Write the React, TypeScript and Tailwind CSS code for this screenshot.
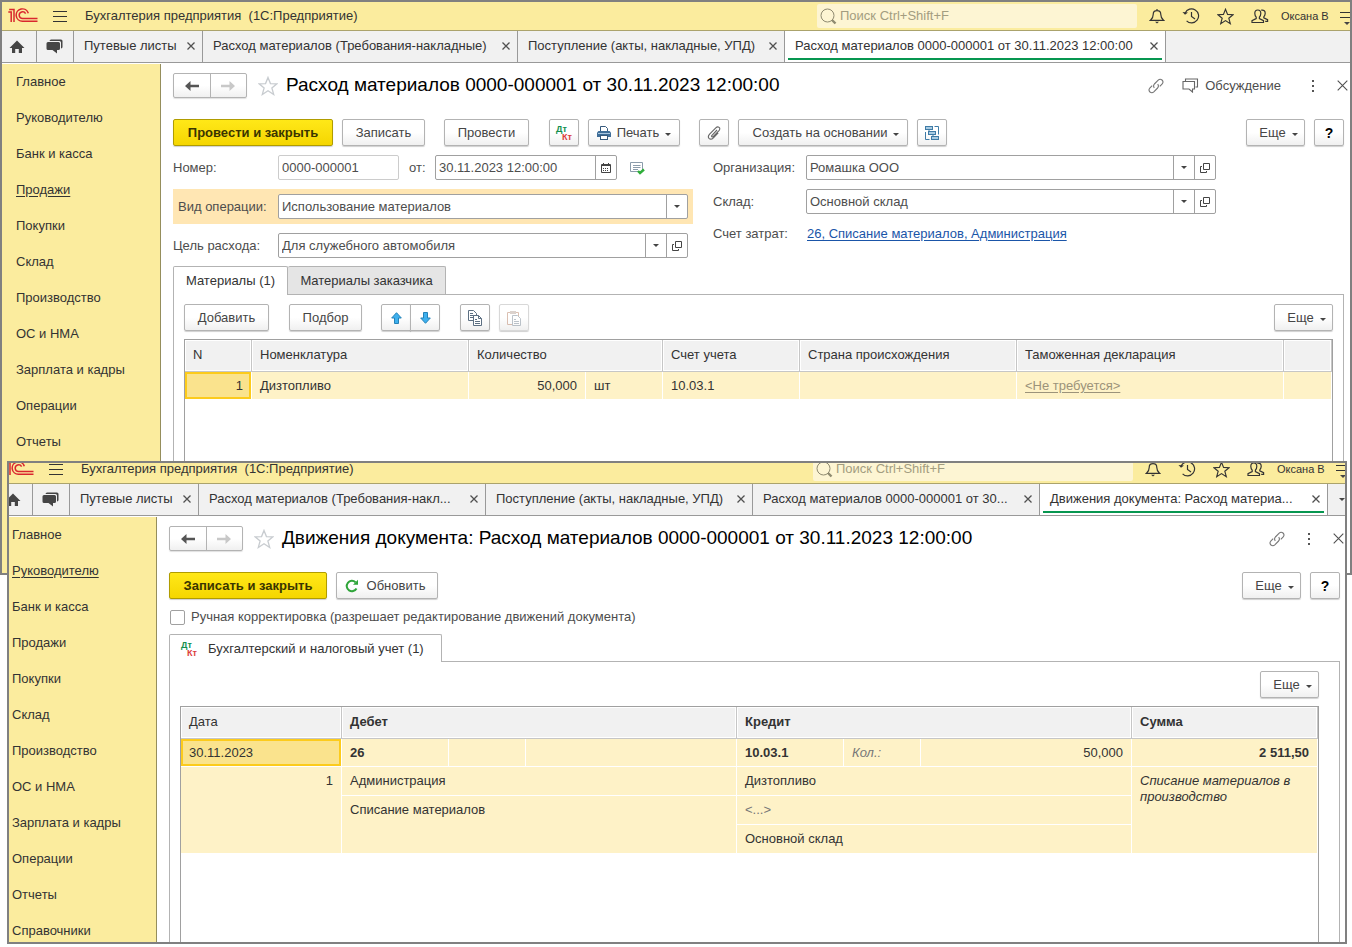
import React from "react";
import clsx from "clsx";

type Tab = { title: string; width: string; active?: boolean };

const SECTIONS = [
  "Главное",
  "Руководителю",
  "Банк и касса",
  "Продажи",
  "Покупки",
  "Склад",
  "Производство",
  "ОС и НМА",
  "Зарплата и кадры",
  "Операции",
  "Отчеты",
  "Справочники",
];

/* ICONS */
const Logo = () => (
  <svg width="30" height="16" viewBox="0 0 30 16" fill="none" stroke="#d9272e" strokeWidth="1.5">
    <path d="M0.3 4 H3.2 V14 M1.2 1.4 H6 V14" />
    <path d="M20.3 5.2 A6.2 6.2 0 1 0 14.5 13.3 H29.5" />
    <path d="M17.6 5.6 A3.4 3.4 0 1 0 14.5 10.6 H29.5" />
  </svg>
);

const Home = () => (
  <svg width="16" height="14" viewBox="0 0 16 14" fill="#454545">
    <path d="M8 0.5 L15.5 8 H13 V13 H9.8 V9 H6.2 V13 H3 V8 H0.5 Z" />
  </svg>
);

const Chats = () => (
  <svg width="18" height="15" viewBox="0 0 18 15" fill="#454545">
    <path d="M5 0.5 H15 Q16.5 0.5 16.5 2 V8 Q16.5 9.3 15 9.5 V3.5 Q15 2 13.5 2 H3.5 Q3.8 0.5 5 0.5 Z" />
    <path d="M2 3 H12.5 Q14 3 14 4.5 V9.5 Q14 11 12.5 11 H11 V14.5 L6.5 11 H2 Q0.5 11 0.5 9.5 V4.5 Q0.5 3 2 3 Z" />
  </svg>
);

const Cross = ({ size = 8 }: { size?: number }) => (
  <svg width={size} height={size} viewBox="0 0 8 8" stroke="#505050" strokeWidth={size > 8 ? 0.8 : 1.3}>
    <path d="M0.5 0.5 L7.5 7.5 M7.5 0.5 L0.5 7.5" />
  </svg>
);

const Search = () => (
  <svg width="17" height="17" viewBox="0 0 17 17" fill="none" stroke="#8f8a70" className="shrink-0">
    <circle cx="7.5" cy="7.5" r="6.5" />
    <path d="M12 12 L15.5 15.5" strokeWidth="2.4" />
  </svg>
);

const Bell = () => (
  <svg width="16" height="16" viewBox="0 0 16 16" fill="none" stroke="#333" strokeWidth="1.2">
    <path d="M8 1 V2.5 M1.5 12.3 H14.5 Q11.8 10 11.8 6.5 Q11.8 2.7 8 2.7 Q4.2 2.7 4.2 6.5 Q4.2 10 1.5 12.3 Z" />
    <path d="M6 13.8 H10 L8 15.5 Z" fill="#333" stroke="none" />
  </svg>
);

const History = () => (
  <svg width="18" height="16" viewBox="0 0 18 16" fill="none" stroke="#333" strokeWidth="1.2">
    <path d="M3.2 5 A7 7 0 1 1 4.6 12.8" />
    <path d="M9.5 4 V8.5 L13 11" />
    <path d="M0.5 4 L3 6.8 L6 4.5 Z" fill="#333" stroke="none" />
  </svg>
);

const Star = ({ size, color }: { size: number; color: string }) => (
  <svg width={size} height={size} viewBox="0 0 18 18" fill="none" stroke={color} strokeWidth="1.2">
    <path d="M9 1.3 L11.2 6.8 L17 7.1 L12.5 10.8 L14.1 16.6 L9 13.3 L3.9 16.6 L5.5 10.8 L1 7.1 L6.8 6.8 Z" />
  </svg>
);

const Users = () => (
  <svg width="18" height="15" viewBox="0 0 18 15" fill="none" stroke="#333" strokeWidth="1.2">
    <path d="M6.8 1 Q9.8 1 9.8 4.3 Q9.8 6.6 8.4 8.2 V9.6 L12.5 11.6 V13.5 H1 V11.6 L5.2 9.6 V8.2 Q3.8 6.6 3.8 4.3 Q3.8 1 6.8 1 Z" />
    <path d="M10.2 1.2 Q14.4 0.6 14.2 4.5 Q14.1 6.3 12.8 7.8 V8.8 L16.6 10.6 V12.3 H14.2" />
  </svg>
);

const Link = () => (
  <svg width="16" height="16" viewBox="0 0 16 16" fill="none" stroke="#757575" strokeWidth="1.1">
    <path d="M6.3 9.8 Q4.8 7.8 6.4 6 L10.2 2.2 Q12 0.5 14 2 Q15.9 4 14.2 6 L11.8 8.4" />
    <path d="M9.7 6.2 Q11.2 8.2 9.6 10 L5.8 13.8 Q4 15.5 2 14 Q0.1 12 1.8 10 L4.2 7.6" />
  </svg>
);

const Discuss = () => (
  <svg width="17" height="15" viewBox="0 0 17 15" fill="none" stroke="#666" strokeWidth="1.1">
    <path d="M3.5 3 V1 H15.5 V9 H13.5" />
    <path d="M1 3.5 H12.5 V11 H10.5 V14 L7 11 H1 Z" />
  </svg>
);

const DtKt = () => (
  <svg width="18" height="18" viewBox="0 0 18 18" fontFamily="Liberation Sans, Arial, sans-serif" fontWeight="bold" fontSize="9">
    <text x="1" y="8" fill="#13904f">Дт</text>
    <text x="7" y="16" fill="#dc3c3c">Кт</text>
  </svg>
);

const Printer = () => (
  <svg width="14" height="14" viewBox="0 0 14 14">
    <path d="M3.5 6 V0.5 H8.5 L10.5 2.5 V6" fill="#fff" stroke="#35597c" />
    <path d="M1.5 5 H12.5 L14 6.5 V11 H0 V6.5 Z" fill="#3f6e99" />
    <path d="M1 7.5 H13" stroke="#a9c6df" />
    <rect x="3.5" y="9.5" width="7" height="4" fill="#fff" stroke="#35597c" />
  </svg>
);

const Clip = () => (
  <svg width="14" height="14" viewBox="0 0 14 14" fill="none" stroke="#666" strokeWidth="1.1">
    <path d="M10 4 L5 9.3 Q4.2 10.2 4.9 10.7 Q5.6 11.2 6.4 10.4 L12 4.6 Q13.6 2.6 12.1 1.4 Q10.5 0.2 8.8 1.9 L2.6 8.2 Q0.4 10.6 2 12.4 Q4 14.2 6.4 11.8 L11.2 6.8" />
  </svg>
);

const Structure = () => (
  <svg width="16" height="16" viewBox="0 0 16 16" fill="#a9cbe2" stroke="#3f7ba6">
    <rect x="1.5" y="1.5" width="7" height="3" />
    <rect x="4.5" y="6.5" width="7" height="3" />
    <rect x="7.5" y="11.5" width="7" height="3" />
    <path d="M10.5 1.5 H14.5 V9.5 M1.5 7 V14.5 H5.5 M5 4.5 V6.5 M9 9.5 V11.5" fill="none" />
  </svg>
);

const Posted = () => (
  <svg width="16" height="14" viewBox="0 0 16 14" fill="none">
    <path d="M1.5 1.5 H13.5 V10.5 H1.5 Z M4 4.5 H11.5 M4 6.5 H11.5 M4 8.5 H9" stroke="#8b9cab" />
    <path d="M9 10 L11 12 L15 8.5" stroke="#2fae3a" strokeWidth="2.4" />
  </svg>
);

const Calendar = () => (
  <svg width="10" height="10" viewBox="0 0 10 10" fill="none" stroke="#444">
    <path d="M0.5 1.5 H9.5 V9.5 H0.5 Z M0.5 2.5 H9.5 M2.5 0 V2 M7.5 0 V2" />
    <path d="M2 5.5 H8 M2 7.5 H8" strokeDasharray="1 1" />
  </svg>
);

const Open = () => (
  <svg width="10" height="10" viewBox="0 0 10 10" fill="none" stroke="#444">
    <path d="M3.5 0.5 H9.5 V6.5 H3.5 Z M2 3.5 H0.5 V9.5 H6.5 V8" />
  </svg>
);

const Caret = () => (
  <svg width="6" height="3" viewBox="0 0 6 3" fill="#444">
    <path d="M0 0 H6 L3 3 Z" />
  </svg>
);

const Arrow = ({ flip, color }: { flip?: boolean; color: string }) => (
  <svg width="14" height="10" viewBox="0 0 14 10" fill={color} className={clsx(flip && "rotate-180")}>
    <path d="M0 5 L5.5 0 V3.7 H14 V6.3 H5.5 V10 Z" />
  </svg>
);

const Move = ({ down }: { down?: boolean }) => (
  <svg width="11" height="12" viewBox="0 0 11 12" fill="#3eb0ee" stroke="#2482b8" className={clsx(down && "rotate-180")}>
    <path d="M5.5 0.7 L10.3 6 H7.5 V11.5 H3.5 V6 H0.7 Z" />
  </svg>
);

const Copy = () => (
  <svg width="16" height="16" viewBox="0 0 16 16" fill="#fff" stroke="#5c6f82">
    <path d="M1.5 0.5 H6.5 L9.5 3.5 V10.5 H1.5 Z M3 3.5 H6 M3 5.5 H8 M3 7.5 H8" />
    <path d="M6.5 5.5 H11.5 L14.5 8.5 V15.5 H6.5 Z M11.5 5.5 V8.5 H14.5 M8 9.5 H10 M8 11.5 H13 M8 13.5 H13" />
  </svg>
);

const Paste = () => (
  <svg width="16" height="16" viewBox="0 0 16 16" fill="#fff" className="opacity-50">
    <path d="M1.5 2.5 H12.5 V14.5 H1.5 Z" stroke="#b98268" />
    <path d="M4 1 H10 V4 H4 Z" fill="#b9a79d" />
    <path d="M6.5 5.5 H11.5 L14.5 8.5 V15.5 H6.5 Z M8 9.5 H10 M8 11.5 H13 M8 13.5 H13" stroke="#7d8b99" />
  </svg>
);

const Refresh = () => (
  <svg width="14" height="14" viewBox="0 0 14 14" fill="none" stroke="#2fa53a" strokeWidth="2">
    <path d="M11.5 9.5 A5.2 5.2 0 1 1 10.5 3.2" />
    <path d="M8 5.8 H13 V0.8 Z" fill="#2fa53a" stroke="none" />
  </svg>
);

/* CONTROLS */
type ButtonProps = React.ButtonHTMLAttributes<HTMLButtonElement> & { primary?: boolean };

const Button = ({ primary, className, ...rest }: ButtonProps) => (
  <button
    type="button"
    className={clsx(
      "flex h-[27px] shrink-0 items-center justify-center rounded-xs border shadow-[0_1px_1px_#00000030]",
      primary
        ? "border-[#b09c00] bg-linear-to-b from-[#ffe817] to-[#f5d600] font-bold text-[#3a3500]"
        : "border-[#b3b3b3] bg-linear-to-b from-white from-50% to-[#f0f0f0] text-[#454545]",
      className
    )}
    {...rest}
  />
);

const More = () => (
  <Button className="w-[59px] gap-1.5 pl-1.5">
    Еще
    <span className="pt-1">
      <Caret />
    </span>
  </Button>
);

const Field = ({ id, value, open }: { id: string; value: string; open?: boolean }) => (
  <div className="flex h-[25px] w-[410px] rounded-xs border border-[#a0a0a0] bg-white">
    <div className="relative flex flex-1">
      <select id={id} className="w-full appearance-none pl-[3px] outline-none">
        <option>{value}</option>
      </select>
      <span className="pointer-events-none absolute inset-y-0 right-0 flex w-[21px] items-center justify-center border-l border-[#a0a0a0]">
        <Caret />
      </span>
    </div>
    {open && (
      <button type="button" aria-label="Открыть" className="flex w-[21px] items-center justify-center border-l border-[#a0a0a0]">
        <Open />
      </button>
    )}
  </div>
);

/* WINDOW */
type WindowProps = {
  tabs: Tab[];
  section: string;
  overflow?: boolean;
  children: React.ReactNode;
};

const AppWindow = ({ tabs, section, overflow, children }: WindowProps) => (
  <div className="flex min-h-0 flex-1 flex-col">
    {/* TOP */}
    <header className="flex h-[29px] shrink-0 items-center border-b border-[#aba36c] bg-[#fbec9e] pl-1.5">
      <Logo />
      <button type="button" aria-label="Меню" className="ml-[15px] flex w-[14px] flex-col gap-1">
        <span className="h-px bg-[#333]" />
        <span className="h-px bg-[#333]" />
        <span className="h-px bg-[#333]" />
      </button>
      <span className="ml-[18px] whitespace-pre">Бухгалтерия предприятия  (1С:Предприятие)</span>
      <label className="ml-auto flex h-6 w-80 items-center gap-[3px] rounded-xs bg-[#fdf5d3] pl-[3px]">
        <Search />
        <input
          type="search"
          aria-label="Поиск"
          placeholder="Поиск Ctrl+Shift+F"
          className="w-full outline-none placeholder:text-[#a39d80]"
        />
      </label>
      <div className="flex items-center gap-[17px] pl-3">
        <button type="button" aria-label="Уведомления"><Bell /></button>
        <button type="button" aria-label="История"><History /></button>
        <button type="button" aria-label="Избранное"><Star size={17} color="#333" /></button>
        <button type="button" aria-label="Пользователи"><Users /></button>
      </div>
      <span className="ml-3 w-[47px] text-[11px] whitespace-nowrap">Оксана В</span>
      <button type="button" aria-label="Настройки" className="ml-3 flex w-2.5 flex-col items-end gap-1 pt-1">
        <span className="h-px w-full bg-[#333]" />
        <span className="h-px w-full bg-[#333]" />
        <Caret />
      </button>
    </header>
    {/* TABS */}
    <nav className="flex h-8 shrink-0 border-b border-[#999] bg-[#f1f1f1]">
      <button type="button" aria-label="Начальная страница" className="flex w-[35px] shrink-0 items-center justify-center border-r border-[#999] pr-1">
        <Home />
      </button>
      <button type="button" aria-label="Обсуждения" className="flex w-[37px] shrink-0 items-center justify-center border-r border-[#999]">
        <Chats />
      </button>
      {tabs.map((tab) => (
        <div
          key={tab.title}
          className={clsx("flex shrink-0 border-r border-[#999] px-[3px] pb-0.5", tab.width, tab.active && "bg-white")}
        >
          <div
            className={clsx(
              "flex flex-1 items-center justify-between border-b-2 pt-0.5 pr-1 pl-[7px]",
              tab.active ? "border-[#079650]" : "border-transparent"
            )}
          >
            <button type="button" className="whitespace-nowrap">{tab.title}</button>
            <button type="button" aria-label="Закрыть"><Cross /></button>
          </div>
        </div>
      ))}
      {overflow && (
        <button type="button" aria-label="Другие вкладки" className="flex flex-1 items-center justify-end pr-px">
          <Caret />
        </button>
      )}
    </nav>
    <div className="flex min-h-0 flex-1 pt-px">
      {/* SECTIONS */}
      <aside className="w-[159px] shrink-0 overflow-hidden border-r border-[#958e5c] bg-[#fbec9e]">
        {SECTIONS.map((item) => (
          <a key={item} href="#" className={clsx("flex h-9 items-center pl-3.5", item === section && "underline underline-offset-2")}>
            {item}
          </a>
        ))}
      </aside>
      <main className="flex min-w-0 flex-1 flex-col pt-[9px] pr-1.5 pl-3">{children}</main>
    </div>
  </div>
);

const FormTitle = ({ title, discuss }: { title: string; discuss?: boolean }) => (
  <div className="flex h-[25px] shrink-0 items-center">
    <div className="flex h-[25px] w-[74px] rounded-xs border border-[#b3b3b3] bg-linear-to-b from-white from-50% to-[#f0f0f0] shadow-[0_1px_1px_#00000020]">
      <button type="button" aria-label="Назад" className="flex flex-1 items-center justify-center border-r border-[#b3b3b3]">
        <Arrow color="#555" />
      </button>
      <button type="button" aria-label="Вперед" disabled className="flex flex-1 items-center justify-center">
        <Arrow flip color="#c8c8c8" />
      </button>
    </div>
    <button type="button" aria-label="В избранное" className="ml-[11px]">
      <Star size={20} color="#c8ccd0" />
    </button>
    <h1 className="ml-2 pb-0.5 text-[19px] leading-6 whitespace-nowrap text-black">{title}</h1>
    <div className="-mr-1 ml-auto flex items-center gap-[18px]">
      <button type="button" aria-label="Ссылка"><Link /></button>
      {discuss && (
        <button type="button" className="flex items-center gap-1.5 pr-2 text-[#4d4d4d]">
          <Discuss />
          Обсуждение
        </button>
      )}
      <button type="button" aria-label="Дополнительно" className="flex w-3 flex-col items-center gap-[3px]">
        <span className="size-0.5 bg-[#555]" />
        <span className="size-0.5 bg-[#555]" />
        <span className="size-0.5 bg-[#555]" />
      </button>
      <button type="button" aria-label="Закрыть"><Cross size={11} /></button>
    </div>
  </div>
);

const Help = () => (
  <Button className="ml-[9px] w-[30px] text-sm font-bold text-black">?</Button>
);

const th = "border-r border-b border-[#c6c6c6] bg-[#f1f1f1] px-2 pb-0.5 text-left font-normal shadow-[inset_0_0_0_1px_#fff]";
const td = "border-r border-b border-white bg-[#fef2c7] px-2";
const selected = "border-r border-b border-white bg-[#fae38d] px-2 shadow-[inset_0_0_0_2px_#fccb1c]";

const MaterialsForm = () => (
  <>
    <FormTitle title="Расход материалов 0000-000001 от 30.11.2023 12:00:00" discuss />
    <div className="mt-[21px] flex">
      <Button primary className="w-40">Провести и закрыть</Button>
      <Button className="ml-[9px] w-[83px]">Записать</Button>
      <Button className="ml-[19px] w-[85px]">Провести</Button>
      <Button className="ml-5 w-[30px]" aria-label="Дт/Кт"><DtKt /></Button>
      <Button className="ml-[9px] w-[92px] gap-1.5">
        <Printer />
        Печать
        <span className="pt-1"><Caret /></span>
      </Button>
      <Button className="ml-[19px] w-[30px]" aria-label="Присоединенные файлы"><Clip /></Button>
      <Button className="ml-[9px] w-[170px] gap-1.5 pl-1.5">
        Создать на основании
        <span className="pt-1"><Caret /></span>
      </Button>
      <Button className="ml-[9px] w-[30px]" aria-label="Структура подчиненности"><Structure /></Button>
      <div className="ml-auto flex">
        <More />
        <Help />
      </div>
    </div>

    {/* FIELDS */}
    <div className="mt-[9px] flex text-[#4d4d4d]">
      <div className="w-[520px]">
        <div className="flex h-[25px] items-center">
          <label htmlFor="number" className="w-[105px]">Номер:</label>
          <input id="number" defaultValue="0000-000001" className="h-[25px] w-[121px] rounded-xs border border-[#ccc] pl-[3px]" />
          <label htmlFor="date" className="w-9 pl-2.5">от:</label>
          <div className="flex h-[25px] w-[182px] rounded-xs border border-[#a0a0a0]">
            <input id="date" defaultValue="30.11.2023 12:00:00" className="min-w-0 flex-1 pl-[3px]" />
            <button type="button" aria-label="Выбрать дату" className="flex w-[21px] items-center justify-center border-l border-[#a0a0a0]">
              <Calendar />
            </button>
          </div>
          <span className="ml-3"><Posted /></span>
        </div>
        <div className="mt-[9px] flex h-[35px] items-center bg-[#ffe6b3]">
          <label htmlFor="operation" className="w-[105px] pl-[5px]">Вид операции:</label>
          <Field id="operation" value="Использование материалов" />
        </div>
        <div className="mt-[9px] flex items-center">
          <label htmlFor="purpose" className="w-[105px]">Цель расхода:</label>
          <Field id="purpose" value="Для служебного автомобиля" open />
        </div>
      </div>
      <div className="ml-5 flex flex-col gap-[9px]">
        <div className="flex items-center">
          <label htmlFor="company" className="w-[93px]">Организация:</label>
          <Field id="company" value="Ромашка ООО" open />
        </div>
        <div className="flex items-center">
          <label htmlFor="store" className="w-[93px]">Склад:</label>
          <Field id="store" value="Основной склад" open />
        </div>
        <div className="flex h-[22px] items-center">
          <span className="w-[94px]">Счет затрат:</span>
          <a href="#" className="text-[#1a55a8] underline underline-offset-2">26, Списание материалов, Администрация</a>
        </div>
      </div>
    </div>

    {/* MATERIALS */}
    <div className="mt-2 flex h-7 shrink-0">
      <button type="button" className="z-10 -mb-px w-[115px] rounded-t-xs border border-b-0 border-[#b3b3b3] bg-white">
        Материалы (1)
      </button>
      <button type="button" className="w-[158px] rounded-t-xs border border-b-0 border-l-0 border-[#b3b3b3] bg-[#e5e5e5]">
        Материалы заказчика
      </button>
    </div>
    <div className="flex min-h-0 flex-1 flex-col border border-b-0 border-[#b3b3b3] px-2.5 pt-[9px]">
      <div className="flex">
        <Button className="w-[85px]">Добавить</Button>
        <Button className="ml-5 w-[73px]">Подбор</Button>
        <Button className="ml-[19px] w-[30px] rounded-r-none" aria-label="Вверх"><Move /></Button>
        <Button className="-ml-px w-[30px] rounded-l-none" aria-label="Вниз"><Move down /></Button>
        <Button className="ml-5 w-[30px]" aria-label="Копировать"><Copy /></Button>
        <Button className="ml-[9px] w-[30px] border-[#d8d8d8]" aria-label="Вставить" disabled><Paste /></Button>
        <div className="ml-auto"><More /></div>
      </div>
      <div className="mt-2 min-h-0 flex-1 border border-b-0 border-[#a0a0a0]">
        <table className="w-full table-fixed border-separate border-spacing-0">
          <colgroup>
            <col className="w-[67px]" />
            <col className="w-[217px]" />
            <col className="w-[117px]" />
            <col className="w-[77px]" />
            <col className="w-[137px]" />
            <col className="w-[217px]" />
            <col />
            <col className="w-12" />
          </colgroup>
          <thead>
            <tr className="h-8">
              <th className={th}>N</th>
              <th className={th}>Номенклатура</th>
              <th className={th} colSpan={2}>Количество</th>
              <th className={th}>Счет учета</th>
              <th className={th}>Страна происхождения</th>
              <th className={th}>Таможенная декларация</th>
              <th className={th} />
            </tr>
          </thead>
          <tbody>
            <tr className="h-7">
              <td className={clsx(selected, "text-right")}>1</td>
              <td className={td}>Дизтопливо</td>
              <td className={clsx(td, "text-right")}>50,000</td>
              <td className={td}>шт</td>
              <td className={td}>10.03.1</td>
              <td className={td} />
              <td className={td}>
                <a href="#" className="text-[#9c937a] underline underline-offset-2">&lt;Не требуется&gt;</a>
              </td>
              <td className={td} />
            </tr>
          </tbody>
        </table>
      </div>
    </div>
  </>
);

const PostingsForm = () => (
  <>
    <FormTitle title="Движения документа: Расход материалов 0000-000001 от 30.11.2023 12:00:00" />
    <div className="mt-[21px] flex">
      <Button primary className="w-[158px]">Записать и закрыть</Button>
      <Button className="ml-[9px] w-[102px] gap-2 pr-1">
        <Refresh />
        Обновить
      </Button>
      <div className="ml-auto flex">
        <More />
        <Help />
      </div>
    </div>
    <label className="mt-2 flex h-5 items-center gap-1.5 pl-px text-[#4d4d4d]">
      <input type="checkbox" className="size-[15px] appearance-none rounded-xs border border-[#a0a0a0] bg-white" />
      Ручная корректировка (разрешает редактирование движений документа)
    </label>
    <div className="mt-[7px] flex h-[27px] shrink-0">
      <button type="button" className="z-10 -mb-px flex w-[273px] items-center gap-2.5 rounded-t-xs border border-b-0 border-[#b3b3b3] bg-white pl-2.5">
        <DtKt />
        Бухгалтерский и налоговый учет (1)
      </button>
    </div>
    <div className="flex min-h-0 flex-1 flex-col border border-b-0 border-[#b3b3b3] px-2.5 pt-[9px]">
      <div className="flex justify-end pr-2.5">
        <More />
      </div>
      <div className="mt-2 mr-2.5 min-h-0 flex-1 border border-b-0 border-[#a0a0a0]">
        <table className="w-full table-fixed border-separate border-spacing-0">
          <colgroup>
            <col className="w-[161px]" />
            <col className="w-[107px]" />
            <col className="w-[77px]" />
            <col className="w-[211px]" />
            <col className="w-[107px]" />
            <col className="w-[77px]" />
            <col className="w-[211px]" />
            <col />
          </colgroup>
          <thead>
            <tr className="h-8">
              <th className={th}>Дата</th>
              <th className={th} colSpan={3}><b>Дебет</b></th>
              <th className={th} colSpan={3}><b>Кредит</b></th>
              <th className={th}><b>Сумма</b></th>
            </tr>
          </thead>
          <tbody>
            <tr className="h-7">
              <td className={selected}>30.11.2023</td>
              <td className={clsx(td, "font-bold")}>26</td>
              <td className={td} />
              <td className={td} />
              <td className={clsx(td, "font-bold")}>10.03.1</td>
              <td className={clsx(td, "text-[#777] italic")}>Кол.:</td>
              <td className={clsx(td, "text-right")}>50,000</td>
              <td className={clsx(td, "text-right font-bold")}>2 511,50</td>
            </tr>
            <tr className="h-[29px]">
              <td rowSpan={3} className={clsx(td, "pt-1.5 text-right align-top")}>1</td>
              <td colSpan={3} className={td}>Администрация</td>
              <td colSpan={3} className={td}>Дизтопливо</td>
              <td rowSpan={3} className={clsx(td, "pt-1.5 align-top leading-4 italic")}>Списание материалов в производство</td>
            </tr>
            <tr className="h-[29px]">
              <td colSpan={3} rowSpan={2} className={clsx(td, "pt-1.5 align-top")}>Списание материалов</td>
              <td colSpan={3} className={clsx(td, "text-[#777]")}>&lt;...&gt;</td>
            </tr>
            <tr className="h-[29px]">
              <td colSpan={3} className={td}>Основной склад</td>
            </tr>
          </tbody>
        </table>
      </div>
    </div>
  </>
);

const MATERIAL_TABS: Tab[] = [
  { title: "Путевые листы", width: "w-[129px]" },
  { title: "Расход материалов (Требования-накладные)", width: "w-[315px]" },
  { title: "Поступление (акты, накладные, УПД)", width: "w-[267px]" },
  { title: "Расход материалов 0000-000001 от 30.11.2023 12:00:00", width: "w-[381px]", active: true },
];

const POSTING_TABS: Tab[] = [
  { title: "Путевые листы", width: "w-[129px]" },
  { title: "Расход материалов (Требования-накл...", width: "w-[287px]" },
  { title: "Поступление (акты, накладные, УПД)", width: "w-[267px]" },
  { title: "Расход материалов 0000-000001 от 30...", width: "w-[287px]" },
  { title: "Движения документа: Расход материа...", width: "w-[288px]", active: true },
];

const App = () => {
  return (
    <div className="relative min-h-screen overflow-hidden bg-white font-['Liberation_Sans',Arial,sans-serif] text-[13px] leading-4 text-[#333]">
      <div className="flex h-[575px] flex-col overflow-hidden border-2 border-[#808080]">
        <AppWindow tabs={MATERIAL_TABS} section="Продажи">
          <MaterialsForm />
        </AppWindow>
      </div>
      {/* second window lies over the first */}
      <div className="absolute top-[461px] right-[5px] bottom-[3px] left-[7px] flex overflow-hidden border-2 border-[#808080] bg-white">
        <div className="-mt-2 -mr-px -ml-[11px] flex min-w-0 flex-1">
          <AppWindow tabs={POSTING_TABS} section="Руководителю" overflow>
            <PostingsForm />
          </AppWindow>
        </div>
      </div>
    </div>
  );
};

export default App;
